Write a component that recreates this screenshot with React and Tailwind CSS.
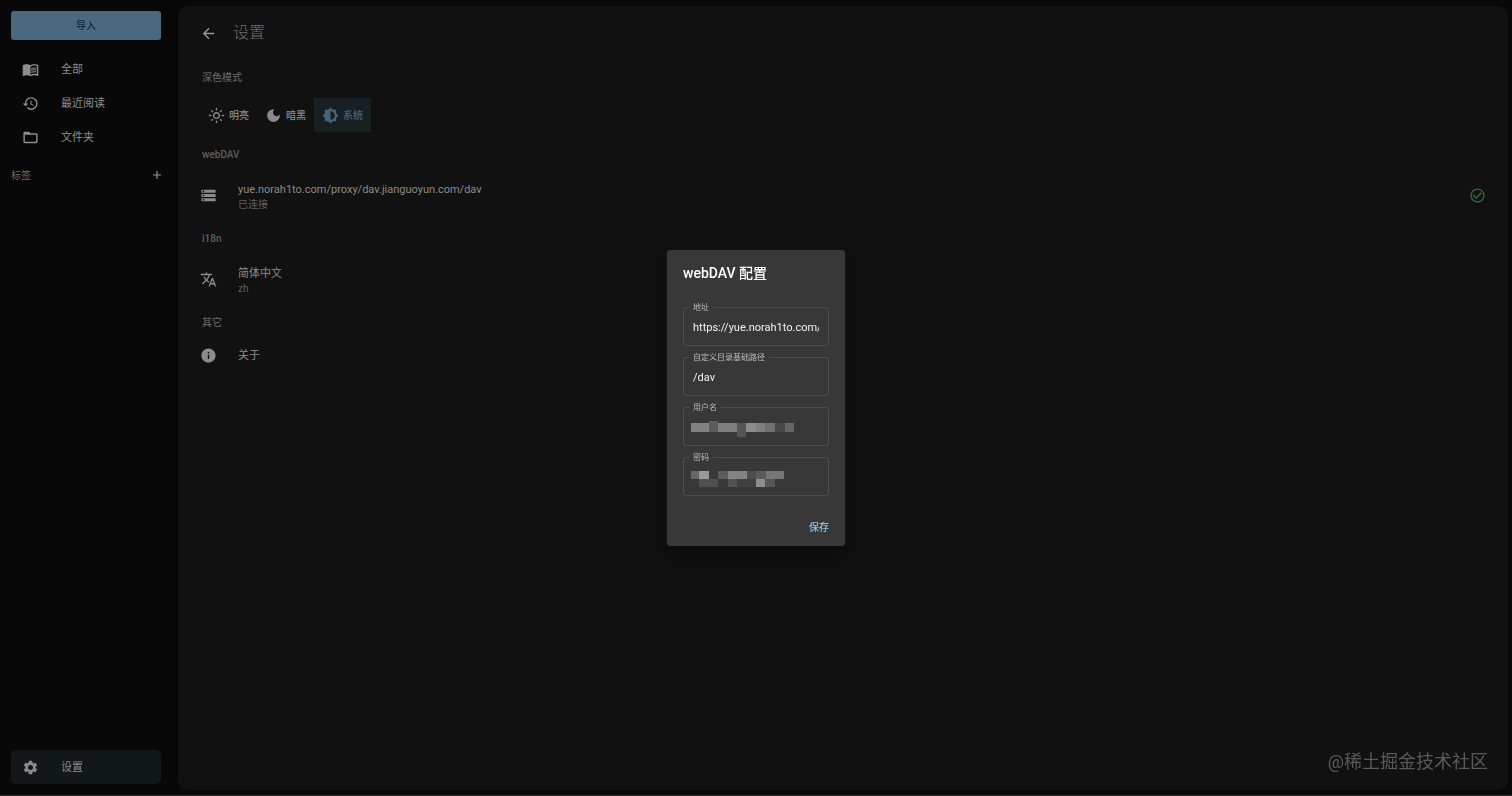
import React, { useState } from 'react';
import {
  MdAdd,
  MdArrowBack,
  MdBrightness6,
  MdCheckCircleOutline,
  MdDarkMode,
  MdFolderOpen,
  MdHistory,
  MdInfo,
  MdMenuBook,
  MdOutlineLightMode,
  MdSettings,
  MdStorage,
  MdTranslate,
} from 'react-icons/md';

const NAV_ITEMS = [
  { label: '全部', icon: MdMenuBook },
  { label: '最近阅读', icon: MdHistory },
  { label: '文件夹', icon: MdFolderOpen },
];

const MODES = [
  { id: 'light', label: '明亮', icon: MdOutlineLightMode },
  { id: 'dark', label: '暗黑', icon: MdDarkMode },
  { id: 'system', label: '系统', icon: MdBrightness6 },
];

// Masked credentials: [x, y, width, height, color]
const USER_MASK = [
  [0, 3, 18, 9, '#828282'],
  [18, 1, 9, 11, '#5c5c5c'],
  [27, 3, 19, 9, '#7e7e7e'],
  [46, 3, 9, 14, '#565656'],
  [55, 3, 10, 9, '#8c8c8c'],
  [65, 3, 9, 9, '#808080'],
  [74, 3, 10, 9, '#707070'],
  [84, 3, 10, 9, '#484848'],
  [94, 3, 9, 9, '#666666'],
];

const PASSWORD_MASK = [
  [0, 1, 8, 8, '#666666'],
  [8, 1, 10, 8, '#989898'],
  [27, 1, 10, 8, '#5c5c5c'],
  [37, 1, 19, 8, '#848484'],
  [56, 1, 9, 8, '#4c4c4c'],
  [65, 1, 10, 8, '#5a5a5a'],
  [75, 1, 18, 8, '#767676'],
  [8, 9, 19, 8, '#505050'],
  [37, 9, 9, 8, '#525252'],
  [46, 9, 19, 8, '#404040'],
  [65, 9, 9, 8, '#8e8e8e'],
  [74, 9, 10, 8, '#565656'],
];

const NavItem = ({ icon: Icon, label, active }) => (
  <button
    className={`flex h-[34px] w-full items-center gap-[22px] rounded-[5px] px-[11px] text-[11px] ${
      active ? 'bg-[#12171a] text-[#8a8a8a]' : 'text-[#8e8e8e]'
    }`}
  >
    <Icon size={17} />
    <span className="pt-0.5">{label}</span>
  </button>
);

const Sidebar = () => (
  <aside className="flex w-[178px] shrink-0 flex-col pt-[11px] pr-[17px] pb-[11px] pl-[11px]">
    <button className="h-[29px] rounded-[3px] bg-[#4b6880] text-[10px] font-medium text-[#0d2c44]">
      导入
    </button>
    <nav className="mt-3">
      {NAV_ITEMS.map((item) => (
        <NavItem key={item.label} {...item} />
      ))}
    </nav>
    <div className="-mr-[3px] flex h-[42px] items-center justify-between text-[10px] text-[#666]">
      标签
      <button aria-label="添加标签" className="text-[#929292]">
        <MdAdd size={14} />
      </button>
    </div>
    <div className="mt-auto">
      <NavItem icon={MdSettings} label="设置" active />
    </div>
  </aside>
);

const SectionLabel = ({ children }) => (
  <h2 className="flex h-[33px] items-center pt-px pl-0.5 text-[10px] font-medium text-[#5f5f5f]">
    {children}
  </h2>
);

const ListRow = ({ icon: Icon, title, detail, children }) => (
  <button
    className={`flex w-full items-center gap-[21px] text-left ${detail ? 'h-[51px]' : 'h-[34px]'}`}
  >
    <Icon size={17} className="text-[#8c8c8c]" />
    <span className="flex-1 pt-0.5">
      <span className="block text-[11px] leading-4 text-[#8a8a8a]">{title}</span>
      {detail && <span className="block text-[10px] leading-[14px] text-[#5f5f5f]">{detail}</span>}
    </span>
    {children}
  </button>
);

const ModeSwitch = () => {
  const [mode, setMode] = useState('system');

  return (
    <div className="flex py-[5px]">
      {MODES.map(({ id, label, icon: Icon }) => (
        <button
          key={id}
          onClick={() => setMode(id)}
          className={`flex h-[34px] items-center gap-1 px-2 text-[10px] font-medium ${
            mode === id ? 'bg-[#182024] text-[#46637c]' : 'text-[#8a8a8a]'
          }`}
        >
          <Icon size={17} />
          {label}
        </button>
      ))}
    </div>
  );
};

const Field = ({ id, label, mask, ...inputProps }) => (
  <fieldset className="relative h-[45px] rounded-[3px] border border-[#4e4e4e] px-[5px]">
    <legend className="px-1 pt-0.5 text-[8px] leading-[10px] text-[#bababa]">
      <label htmlFor={id}>{label}</label>
    </legend>
    <input
      id={id}
      className="block h-[29px] w-full bg-transparent px-1 text-[11px] text-[#f2f2f2] outline-none"
      {...inputProps}
    />
    {mask && (
      <svg className="absolute top-[7px] left-[7px]" width="103" height="18">
        {mask.map(([x, y, width, height, fill]) => (
          <rect key={`${x}-${y}`} x={x} y={y} width={width} height={height} fill={fill} />
        ))}
      </svg>
    )}
  </fieldset>
);

const WebDavDialog = () => (
  <div className="fixed inset-0 flex items-center justify-center">
    <form
      role="dialog"
      aria-labelledby="webdav-title"
      onSubmit={(e) => e.preventDefault()}
      className="w-[178px] rounded-[3px] bg-[#383838] px-4 shadow-[0_8px_20px_4px_rgba(0,0,0,0.35)]"
    >
      <h2 id="webdav-title" className="pt-[13px] text-[14px] leading-5 font-medium text-white">
        webDAV 配置
      </h2>
      <div className="mt-[18px] flex flex-col gap-[5px]">
        <Field id="address" label="地址" defaultValue="https://yue.norah1to.com/proxy/dav.jianguoyun.com/dav" />
        <Field id="base-path" label="自定义目录基础路径" defaultValue="/dav" />
        <Field id="username" label="用户名" mask={USER_MASK} />
        <Field id="password" label="密码" type="password" mask={PASSWORD_MASK} />
      </div>
      <div className="mt-5 flex justify-end pb-2">
        <button className="h-[22px] text-[10px] font-medium text-[#90c4ea]">保存</button>
      </div>
    </form>
  </div>
);

const App = () => (
  <div className="flex min-h-screen border-b border-[#2c2c2c] bg-[#080808] font-[Roboto,'Noto_Sans_CJK_SC',sans-serif]">
    <Sidebar />
    <main className="mt-1.5 mr-1 mb-[5px] flex-1 rounded-[10px] bg-[#111] px-[22px]">
      <header className="flex h-[54px] items-center gap-4">
        <button aria-label="返回" className="text-[#969696]">
          <MdArrowBack size={17} />
        </button>
        <h1 className="text-[16px] font-light text-[#6e6e6e]">设置</h1>
      </header>

      <SectionLabel>深色模式</SectionLabel>
      <ModeSwitch />

      <SectionLabel>webDAV</SectionLabel>
      <ListRow icon={MdStorage} title="yue.norah1to.com/proxy/dav.jianguoyun.com/dav" detail="已连接">
        <MdCheckCircleOutline size={17} className="text-[#2f6a3c]" />
      </ListRow>

      <SectionLabel>i18n</SectionLabel>
      <ListRow icon={MdTranslate} title="简体中文" detail="zh" />

      <SectionLabel>其它</SectionLabel>
      <ListRow icon={MdInfo} title="关于" />
    </main>

    <WebDavDialog />
    <p className="pointer-events-none fixed right-6 bottom-[21px] text-[18px] text-[#5a5a5a]">
      @稀土掘金技术社区
    </p>
  </div>
);

export default App;
